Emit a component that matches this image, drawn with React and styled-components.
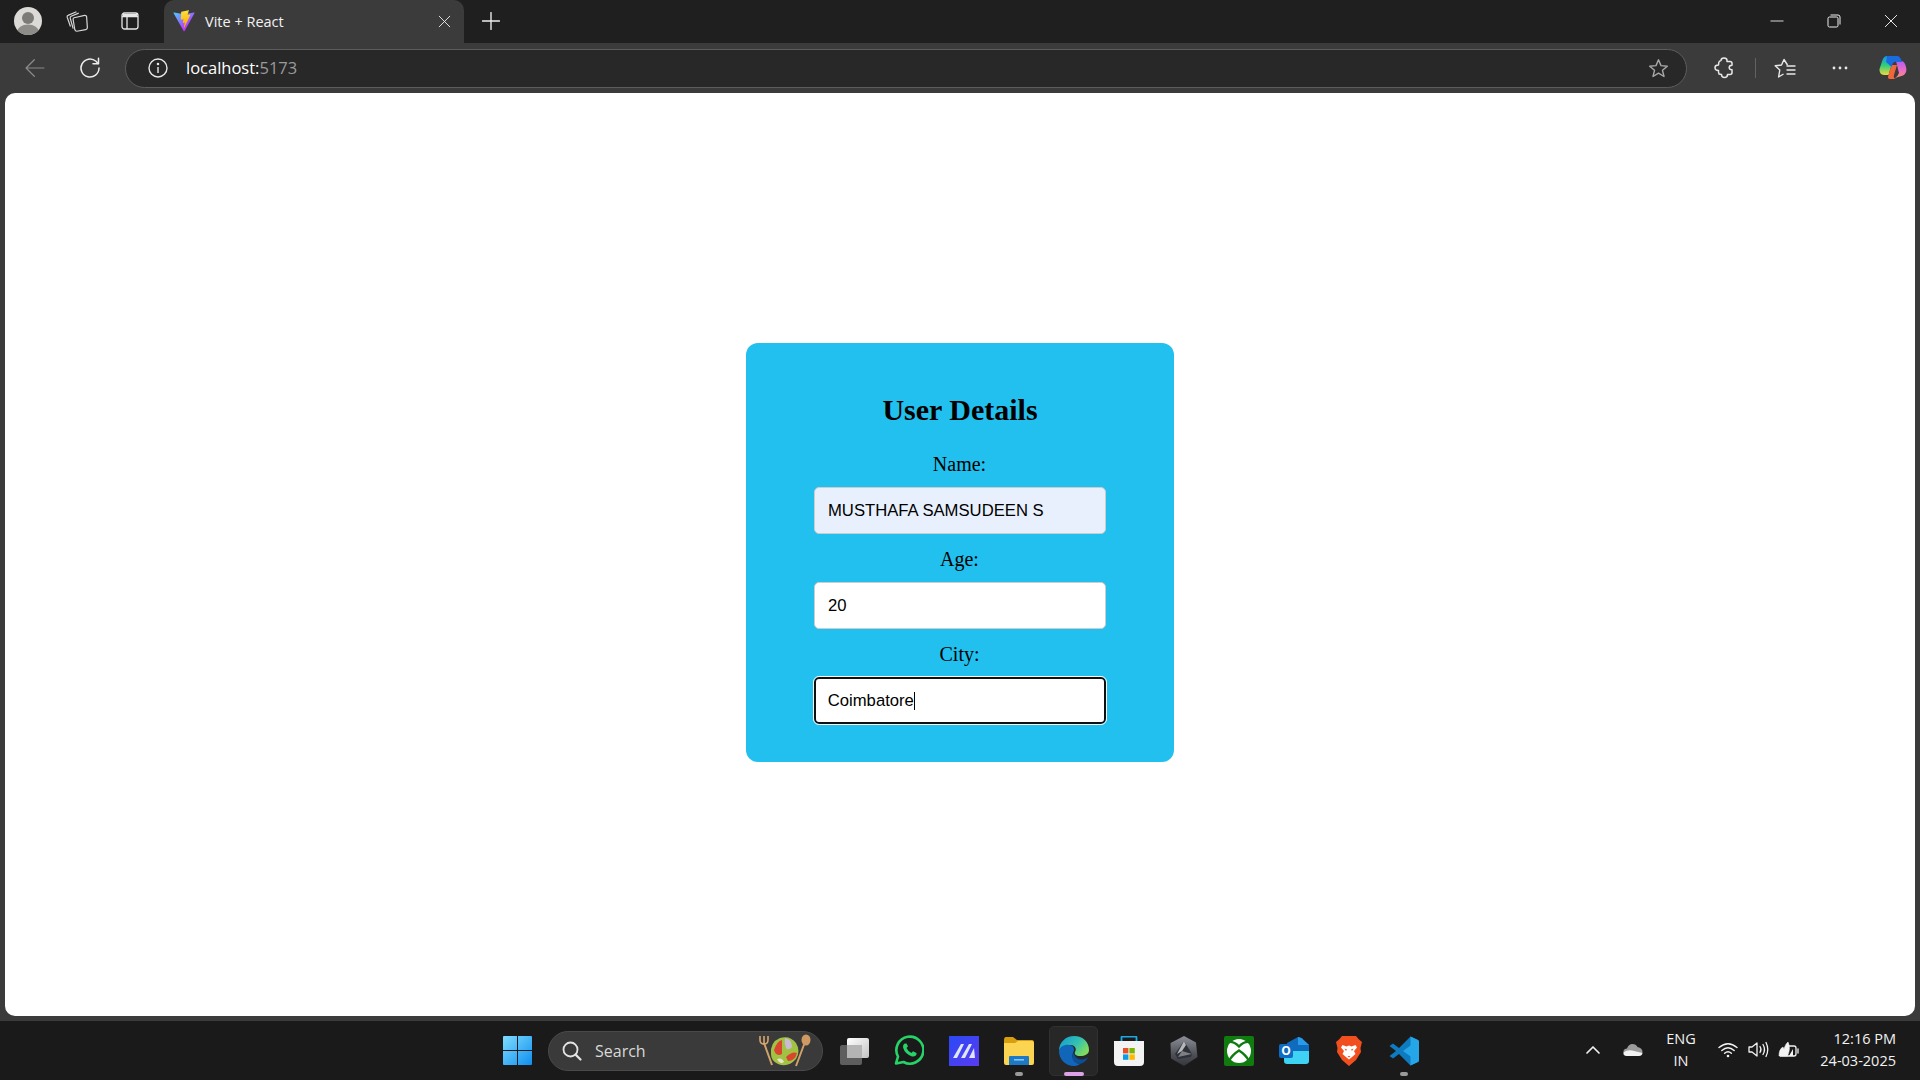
import React from 'react';
import styled, { createGlobalStyle } from 'styled-components';

const GlobalStyle = createGlobalStyle`
  html, body { margin: 0; padding: 0; height: 100%; background: #3b3b3b; overflow: hidden; }
  #root { height: 100%; }
  * { box-sizing: border-box; }
`;

const Screen = styled.div`
  display: flex;
  flex-direction: column;
  height: 1080px;
  width: 1920px;
  font-family: "Open Sans", "Noto Sans", sans-serif;
  color: #fff;
`;

/* browser chrome */
const TabStrip = styled.div`
  display: flex;
  align-items: center;
  height: 43px;
  background: #1f1f1f;
  flex: none;
`;

const StripButton = styled.div`
  display: flex;
  align-items: center;
  justify-content: center;
  flex: none;
  width: ${(p) => p.w || 54}px;
  height: 43px;
  padding-bottom: 1px;
`;

const Tab = styled.div`
  display: flex;
  align-items: center;
  width: 300px;
  height: 43px;
  margin-left: 3px;
  padding: 0 13px 1px 9px;
  background: #3b3b3b;
  border-radius: 10px 10px 0 0;
  font-size: 14.5px;
`;

const TabTitle = styled.span`
  flex: 1;
  margin-left: 10px;
  color: #f2f2f2;
`;

const Spacer = styled.div`
  flex: 1;
`;

const Toolbar = styled.div`
  display: flex;
  align-items: center;
  height: 50px;
  flex: none;
  background: #3b3b3b;
  padding-left: 8px;
`;

const AddressBar = styled.div`
  display: flex;
  align-items: center;
  width: 1562px;
  height: 39px;
  margin: 0 6px 0 8px;
  padding: 0 17px 0 22px;
  background: #282828;
  border: 1.5px solid #5d5d5d;
  border-radius: 20px;
  font-size: 16.5px;
`;

const Host = styled.span`
  margin: 0 0 2px 18px;
  color: #fff;
`;

const Port = styled.span`
  flex: 1;
  margin-bottom: 2px;
  color: #9a9a9a;
`;

const ToolButton = styled.div`
  display: flex;
  align-items: center;
  justify-content: center;
  flex: none;
  width: ${(p) => p.w || 54}px;
  height: 40px;
`;

const ToolDivider = styled.div`
  width: 1px;
  height: 20px;
  flex: none;
  background: #626262;
`;

/* page */
const Page = styled.main`
  flex: 1;
  display: flex;
  justify-content: center;
  align-items: flex-start;
  margin: 0 5px 5px;
  padding-top: 250px;
  background: #fff;
  border-radius: 10px;
`;

const Card = styled.form`
  display: flex;
  flex-direction: column;
  align-items: center;
  width: 428px;
  height: 419px;
  padding-top: 50px;
  background: #22c0ee;
  border-radius: 12px;
  font-family: "Liberation Serif", "Times New Roman", serif;
  color: #000;
`;

const Heading = styled.h2`
  margin: 0 0 26px;
  font-size: 30px;
  line-height: 34px;
  font-weight: 700;
`;

const Label = styled.label`
  display: block;
  margin-right: 1px;
  font-size: 20px;
  line-height: 23px;
`;

const Field = styled.div`
  width: 292px;
  height: 47px;
  margin: 11px 0 ${(p) => (p.last ? 0 : 14)}px;
  display: flex;
  align-items: center;
  padding-left: 13px;
  background: ${(p) => (p.filled ? '#e8f0fe' : '#fff')};
  border: 1.25px solid #cccccc;
  border-radius: 5px;
  font-family: "Liberation Sans", Arial, sans-serif;
  font-size: 16.67px;
  ${(p) =>
    p.focused &&
    `
    border: 2.5px solid #101010;
    padding-left: 11.75px;
    outline: 1.25px solid #fff;
  `}
`;

const Caret = styled.span`
  display: inline-block;
  width: 1px;
  height: 18px;
  background: #000;
`;

/* taskbar */
const Taskbar = styled.footer`
  display: flex;
  align-items: center;
  height: 59px;
  flex: none;
  background: #1a1a1a;
  padding-left: 490px;
`;

const StartButton = styled.div`
  display: flex;
  align-items: center;
  justify-content: center;
  width: 55px;
  height: 50px;
  flex: none;
`;

const SearchPill = styled.div`
  display: flex;
  align-items: center;
  width: 275px;
  height: 40px;
  margin: 0 3px 0 3px;
  padding: 0 10px 0 13px;
  background: #3a3a3a;
  border: 1px solid #4a4a4a;
  border-radius: 20px;
  font-size: 16px;
  color: #d8d8d8;
`;

const SearchText = styled.span`
  flex: 1;
  margin-left: 13px;
`;

const TaskSlot = styled.div`
  position: relative;
  display: flex;
  align-items: center;
  justify-content: center;
  width: 55px;
  height: 50px;
  flex: none;
`;

const TaskIcon = styled.div`
  position: relative;
  display: flex;
`;

const ActiveBox = styled.div`
  position: absolute;
  left: 3px;
  top: 0;
  width: 49px;
  height: 50px;
  background: #272727;
  border: 1px solid #303030;
  border-radius: 5px;
`;

const RunDot = styled.span`
  position: absolute;
  bottom: 0;
  left: 50%;
  transform: translateX(-50%);
  width: ${(p) => (p.active ? 20 : 8)}px;
  height: 4px;
  border-radius: 2px;
  background: ${(p) => (p.active ? '#dba2e6' : '#9a9a9a')};
`;

const Tray = styled.div`
  display: flex;
  align-items: center;
  margin-left: auto;
  padding: 0 24px 2px 0;
  font-size: 14.5px;
  color: #f2f2f2;
`;

const TrayIcon = styled.div`
  display: flex;
  align-items: center;
  justify-content: center;
  width: ${(p) => p.w || 30}px;
  margin-left: ${(p) => p.ml || 0}px;
`;

const Lang = styled.div`
  width: 50px;
  margin: 0 7px 0 8px;
  text-align: center;
  line-height: 22px;
`;

const Clock = styled.div`
  width: 80px;
  margin-left: 13px;
  text-align: right;
  line-height: 22px;
  white-space: nowrap;
`;

/* icons */
const Avatar = () => (
  <svg width="28" height="28" viewBox="0 0 28 28">
    <clipPath id="av"><circle cx="14" cy="14" r="14" /></clipPath>
    <g clipPath="url(#av)">
      <rect width="28" height="28" fill="#dcdad6" />
      <circle cx="14" cy="11" r="6" fill="#7d7b78" />
      <ellipse cx="14" cy="25" rx="11" ry="7.5" fill="#8e8c89" />
    </g>
  </svg>
);

const Collections = () => (
  <svg width="24" height="24" viewBox="0 0 22 22" fill="none" stroke="#d6d6d6" strokeWidth="1.1" strokeLinejoin="round">
    <path d="M5 16 L2 7.5 Q1.6 6.2 2.8 5.8 L10.5 2.5" />
    <path d="M7.5 18 L4.8 8.5 Q4.5 7.2 5.6 6.7 L12.6 3.8" />
    <path d="M8.3 8 L18 5.8 Q19.6 5.7 19.8 7 L20.5 17 Q20.6 18.6 19 18.9 L10.8 20.4 Q9.3 20.4 9 19 L7.4 9.4 Q7.3 8.3 8.3 8 Z" />
  </svg>
);

const VerticalTabs = () => (
  <svg width="18" height="18" viewBox="0 0 18 18" fill="none" stroke="#e6e6e6" strokeWidth="1.3">
    <rect x="1" y="1" width="16" height="16" rx="2.5" />
    <path d="M1 4.5 H17 M6 4.5 V17" />
    <path d="M2 2 H16 V4.5 H2 Z" fill="#e6e6e6" stroke="none" />
  </svg>
);

const ViteLogo = () => (
  <svg width="22" height="22" viewBox="0 0 410 404">
    <defs>
      <linearGradient id="va" x1="6" y1="33" x2="235" y2="344" gradientUnits="userSpaceOnUse">
        <stop stopColor="#41D1FF" />
        <stop offset="1" stopColor="#BD34FE" />
      </linearGradient>
      <linearGradient id="vb" x1="194" y1="8" x2="236" y2="292" gradientUnits="userSpaceOnUse">
        <stop stopColor="#FFEA83" />
        <stop offset="0.08" stopColor="#FFDD35" />
        <stop offset="1" stopColor="#FFA800" />
      </linearGradient>
    </defs>
    <path d="M399.6 59.5 215.9 388.2c-3.8 6.8-13.5 6.8-17.4.1L11.2 59.5c-4.2-7.4 2.1-16.3 10.4-14.8l183.9 32.9c1.2.2 2.4.2 3.5 0l180-32.8c8.3-1.5 14.7 7.3 10.6 14.7Z" fill="url(#va)" />
    <path d="M292.9 1.6 156.9 28.2c-2.2.4-3.8 2.3-4 4.6l-8.4 141.3c-.2 3.3 2.9 5.9 6.1 5.2l37.9-8.7c3.5-.8 6.7 2.3 6 5.9l-11.3 55.2c-.7 3.7 2.7 6.9 6.3 5.8l23.4-7.1c3.6-1.1 7.1 2.1 6.3 5.8l-17.9 86.6c-1.1 5.4 6.1 8.4 9.1 3.7l2-3.1L323.4 88.9c1.9-3.7-1.3-7.9-5.4-7.1l-38.9 7.5c-3.7.7-6.8-2.7-5.8-6.3l25.4-88c1-3.7-2.2-7.1-5.8-6.4Z" fill="url(#vb)" />
  </svg>
);

const Line = ({ size = 16, d, color = '#f0f0f0', sw = 1.3 }) => (
  <svg width={size} height={size} viewBox="0 0 16 16" fill="none" stroke={color} strokeWidth={sw} strokeLinecap="round" strokeLinejoin="round">
    <path d={d} />
  </svg>
);

const BackArrow = () => <Line size={22} color="#8a8a8a" sw={0.9} d="M1.5 8 H14.5 M7.5 2 L1.5 8 L7.5 14" />;

const Reload = () => (
  <svg width="22" height="22" viewBox="0 0 22 22" fill="none" stroke="#ececec" strokeWidth="1.5" strokeLinecap="round" strokeLinejoin="round">
    <path d="M20 11 A9 9 0 1 1 17 4.3 L19 6.5" />
    <path d="M19.5 1.2 V6.8 H14" />
  </svg>
);

const InfoIcon = () => (
  <svg width="20" height="20" viewBox="0 0 20 20" fill="none" stroke="#e8e8e8" strokeWidth="1.4">
    <circle cx="10" cy="10" r="9" />
    <path d="M10 9 V15" />
    <circle cx="10" cy="6" r="0.6" fill="#e8e8e8" />
  </svg>
);

const StarPath = 'M10.5 1.8 13 7.6l6.3.6-4.8 4.1 1.5 6.2-5.5-3.3L5 18.5l1.5-6.2L1.7 8.2 8 7.6Z';

const StarOutline = () => (
  <svg width="21" height="21" viewBox="0 0 21 21" fill="none" stroke="#a8a8a8" strokeWidth="1.4" strokeLinejoin="round">
    <path d={StarPath} />
  </svg>
);

const Puzzle = () => (
  <svg width="20" height="22" viewBox="0 0 20 22" fill="none" stroke="#e8e8e8" strokeWidth="1.5" strokeLinejoin="round">
    <path d="M7 3.5 Q7 1 10 1 Q13 1 13 3.5 L13 4.5 L16 4.5 Q18 4.5 18 6.5 L18 8.2 Q15.2 8.2 15.2 10.5 Q15.2 12.8 18 12.8 L18 15.5 Q18 17.5 16 17.5 L13.5 17.5 Q13.5 20.5 10.5 20.5 Q7.5 20.5 7.5 17.5 L5 17 Q4.2 14.5 4.5 13.5 Q1 13.5 1 10.5 Q1 8 4.5 8 L4.8 5.5 Q5 4 7 3.5 Z" />
  </svg>
);

const Favorites = () => (
  <svg width="22" height="21" viewBox="0 0 22 21" fill="none" stroke="#e8e8e8" strokeWidth="1.4" strokeLinejoin="round">
    <path d="M13.5 7 L10 1.5 L7.5 7 L1.2 7.8 L5.8 12 L4.6 19 L9.5 16" />
    <path d="M13 8 H21 M13 12 H21 M13 16 H21" strokeLinecap="round" />
  </svg>
);

const Dots = () => (
  <svg width="16" height="4" viewBox="0 0 16 4" fill="#e8e8e8">
    <circle cx="2" cy="2" r="1.4" />
    <circle cx="8" cy="2" r="1.4" />
    <circle cx="14" cy="2" r="1.4" />
  </svg>
);

const Copilot = () => (
  <svg width="28" height="28" viewBox="0 0 28 28">
    <defs>
      <linearGradient id="ca" x1="0.3" y1="0" x2="0.3" y2="1">
        <stop offset="0" stopColor="#1a8ff0" />
        <stop offset="0.5" stopColor="#2fd07a" />
        <stop offset="1" stopColor="#f0d83a" />
      </linearGradient>
      <linearGradient id="cb" x1="0.5" y1="0" x2="0.5" y2="1">
        <stop offset="0" stopColor="#b45cf0" />
        <stop offset="0.6" stopColor="#f070c0" />
        <stop offset="1" stopColor="#f59070" />
      </linearGradient>
    </defs>
    <path d="M8 2 H18 Q15 3 14 6 L9.5 21 H5 Q0 20.5 0.5 15 L3.5 6 Q5 2 8 2 Z" fill="url(#ca)" />
    <path d="M17 7 H23 Q26 8 27 13 Q28.5 19 24 21.5 L16 24 Q19 22 20 19 Z" fill="url(#cb)" />
    <path d="M9.5 21 L12.5 11 L15 11 L18 11 L15 21 Q14 25 17.5 25 H11 Q8 25 9.5 21 Z" fill="#f2663a" />
    <path d="M8 2 H18 Q21 2 22.5 6.5 L23 8 H18 Q16 7 14 9 L12.5 13 L7 8 Q8 4 8 2 Z" fill="#1a6ae0" />
  </svg>
);

const MinIcon = () => <Line size={14} sw={1} d="M1 8 H15" />;

const RestoreIcon = () => (
  <svg width="14" height="14" viewBox="0 0 14 14" fill="none" stroke="#f0f0f0" strokeWidth="1">
    <rect x="1" y="3" width="10" height="10" rx="1.5" />
    <path d="M3.5 1 H11 Q13 1 13 3 V10.5" />
  </svg>
);

const CloseIcon = ({ size = 14 }) => <Line size={size} sw={1.1} d="M1.5 1.5 L14.5 14.5 M14.5 1.5 L1.5 14.5" />;

const PlusIcon = () => <Line size={18} sw={1.2} d="M8 0.5 V15.5 M0.5 8 H15.5" />;

const WindowsLogo = () => (
  <svg width="29" height="29" viewBox="0 0 29 29">
    <defs>
      <linearGradient id="wl" x1="0" y1="0" x2="1" y2="1">
        <stop offset="0" stopColor="#7fdcff" />
        <stop offset="1" stopColor="#0f8fef" />
      </linearGradient>
    </defs>
    <path d="M1 0 H14 V14 H0 V1 Q0 0 1 0 Z M15 0 H28 Q29 0 29 1 V14 H15 Z M0 15 H14 V29 H1 Q0 29 0 28 Z M15 15 H29 V28 Q29 29 28 29 H15 Z" fill="url(#wl)" />
  </svg>
);

const SearchIcon = () => (
  <svg width="20" height="20" viewBox="0 0 20 20" fill="none" stroke="#e4e4e4" strokeWidth="1.8" strokeLinecap="round">
    <circle cx="8.5" cy="8.5" r="7" />
    <path d="M13.6 13.6 L18.5 18.5" strokeWidth="2.2" />
  </svg>
);

const Salad = () => (
  <svg width="54" height="34" viewBox="0 0 54 34">
    <path d="M6 9 L14 31" stroke="#d3a26c" strokeWidth="2" />
    <path d="M2 2 V6 Q2 10 6 10 Q10 10 10 6 V2 M6 2 V10" fill="none" stroke="#d7a56e" strokeWidth="1.6" />
    <path d="M47 8 L38 32" stroke="#d3a26c" strokeWidth="2" />
    <ellipse cx="48" cy="6" rx="4.5" ry="5.5" fill="#cf9a62" />
    <path d="M13 20 Q12 8 22 4 Q32 1 38 9 Q43 17 38 25 Q30 34 20 30 Q13 27 13 20 Z" fill="#a2c244" />
    <path d="M16 16 Q19 7 24 6 L24 20 Q18 23 16 16 Z" fill="#d9452e" />
    <path d="M27 4 Q34 5 34 13 Q30 17 28 14 Q26 9 27 4 Z" fill="#cbbad6" />
    <path d="M28 23 Q34 17 39 19 Q37 27 30 27 Z" fill="#d9452e" />
    <path d="M19 25 Q24 23 26 28 Q22 31 19 25 Z" fill="#e9e4cf" />
  </svg>
);

const TaskView = () => (
  <svg width="30" height="28" viewBox="0 0 30 28">
    <defs>
      <linearGradient id="tv" x1="0" y1="0" x2="1" y2="1">
        <stop offset="0" stopColor="#ffffff" />
        <stop offset="1" stopColor="#c4c4c4" />
      </linearGradient>
    </defs>
    <rect x="1" y="8" width="22" height="20" rx="2" fill="#5e5e5e" />
    <rect x="8" y="1" width="22" height="20" rx="2" fill="url(#tv)" />
    <rect x="8" y="8" width="15" height="13" fill="#b4b4b4" />
  </svg>
);

const WhatsApp = () => (
  <svg width="30" height="31" viewBox="0 0 30 31" fill="none">
    <path d="M2 28.5 L4 21.5 A13.5 13.5 0 1 1 9.5 27 Z" stroke="#25d366" strokeWidth="2.6" strokeLinejoin="round" />
    <path d="M10.8 8.5 Q8.5 9.5 9.2 13 Q11 19 18 21.5 Q21.5 22 22.5 19.5 L22.5 18 L19 16.2 L17.5 18 Q14 16.5 12.5 13 L14 11.3 L12.5 8.5 Z" fill="#25d366" />
  </svg>
);

const LinearApp = () => (
  <svg width="30" height="30" viewBox="0 0 30 30">
    <defs>
      <linearGradient id="la" x1="0" y1="0" x2="1" y2="1">
        <stop offset="0" stopColor="#2a49f5" />
        <stop offset="1" stopColor="#5b3bf0" />
      </linearGradient>
    </defs>
    <rect width="30" height="30" fill="url(#la)" />
    <path d="M4 22 L12 8 H15 L8 22 Z M12 22 L20 8 H23 L16 22 Z" fill="#dfe6ff" />
    <path d="M20 22 L25 12 L26 22 Z" fill="#dfe6ff" />
  </svg>
);

const Folder = () => (
  <svg width="30" height="28" viewBox="0 0 30 28">
    <path d="M0 3 Q0 0 2 0 H9 L13 3 H28 Q30 3 30 6 V10 H0 Z" fill="#d99e0e" />
    <path d="M0 6 H11 L14 4 H28 Q30 4 30 6 V26 Q30 28 28 28 H2 Q0 28 0 26 Z" fill="#fbd451" />
    <path d="M5 28 V20 Q5 19 6 19 H24 Q25 19 25 20 V28 Z" fill="#1d78c6" />
    <rect x="10" y="22" width="10" height="1.6" fill="#7fc6f5" />
  </svg>
);

const Edge = () => (
  <svg width="30" height="30" viewBox="0 0 30 30">
    <defs>
      <linearGradient id="ed" x1="0" y1="0" x2="1" y2="0.6">
        <stop offset="0" stopColor="#0f9ad6" />
        <stop offset="0.6" stopColor="#35c1b0" />
        <stop offset="1" stopColor="#7fdc5e" />
      </linearGradient>
    </defs>
    <path d="M15 0 C24 0 30 6 30 14 C30 18 26 20 21 20 C17 20 15 18 16 16 C18 13 16 9 12 9 C6 9 0 13 0 15 C0 6 7 0 15 0 Z" fill="url(#ed)" />
    <path d="M0 15 C1 10 6 8 11 9 C15 10 16 13 14 17 C12 22 15 27 21 28 C18 30 16 30 15 30 C6 30 0 23 0 15 Z" fill="#1166ba" />
    <path d="M14 17 C12 22 15 28 21 28 C25 27 28 24 29 21 C26 24 18 25 15.5 19 Z" fill="#0b4f98" />
  </svg>
);

const Store = () => (
  <svg width="30" height="30" viewBox="0 0 30 30">
    <path d="M7.5 5 V1.5 Q7.5 0.5 8.5 0.5 H21.5 Q22.5 0.5 22.5 1.5 V5" fill="none" stroke="#1ca9e8" strokeWidth="1.8" />
    <path d="M0 5 H30 V26 Q30 30 26 30 H4 Q0 30 0 26 Z" fill="#f3f3f3" />
    <rect x="9" y="12" width="5.4" height="5.4" fill="#e8502a" />
    <rect x="15.4" y="12" width="5.4" height="5.4" fill="#7ab800" />
    <rect x="9" y="18.4" width="5.4" height="5.4" fill="#0a9ce8" />
    <rect x="15.4" y="18.4" width="5.4" height="5.4" fill="#fbb900" />
  </svg>
);

const HexApp = () => (
  <svg width="28" height="30" viewBox="0 0 28 30">
    <defs>
      <linearGradient id="hx" x1="0" y1="0" x2="0" y2="1">
        <stop offset="0" stopColor="#8d9098" />
        <stop offset="0.6" stopColor="#4e5158" />
        <stop offset="1" stopColor="#33353b" />
      </linearGradient>
    </defs>
    <path d="M14 0 L26 6.5 L27.5 21 L14 30 L1 22.5 L0.5 7 Z" fill="url(#hx)" />
    <path d="M14 5 L22 18 L21 21 L8 23 L5 18 Z" fill="#2f3136" />
    <path d="M14 5 L7 18 L12 15 L16 9 Z" fill="#b5b7bc" />
    <path d="M12 15 L22 18 L8 21 Z" fill="#7c7f86" />
  </svg>
);

const Xbox = () => (
  <svg width="30" height="30" viewBox="0 0 30 30">
    <rect width="30" height="30" rx="2" fill="#107c10" />
    <circle cx="15" cy="15" r="12" fill="#fff" />
    <path d="M4 6 Q10 5 15 10.5 Q20 5 26 6" fill="none" stroke="#107c10" strokeWidth="2.4" />
    <path d="M5 25 Q8 19 15 14.5 Q22 19 25 25" fill="none" stroke="#107c10" strokeWidth="2.4" />
  </svg>
);

const Outlook = () => (
  <svg width="30" height="27" viewBox="0 0 30 27">
    <path d="M8 6 L19 0 Q21 0 23 1.5 L30 8 V14 H8 Z" fill="#0f6cbd" />
    <path d="M19 0 Q21 0 23 1.5 L30 8 H19 Z" fill="#2a9be8" />
    <path d="M5 14 H30 V24 Q30 27 27 27 H8 Q5 27 5 24 Z" fill="#3ed2f5" />
    <rect x="0" y="7" width="14" height="14" rx="2" fill="#0f6cc4" />
    <text x="7" y="18" fill="#fff" fontSize="12" fontWeight="700" textAnchor="middle" fontFamily="Open Sans, sans-serif">O</text>
  </svg>
);

const Brave = () => (
  <svg width="26" height="30" viewBox="0 0 26 30">
    <path d="M6 0 H20 L23 3.5 L26 6 L24.5 12 L25 16 L20 24 L13 30 L6 24 L1 16 L1.5 12 L0 6 L3 3.5 Z" fill="#f24f1f" />
    <path d="M6.5 9 L10.5 10.5 L13 9.5 L15.5 10.5 L19.5 9 L21 11.5 L18 15 L19.5 18 L16 21 L13 23.5 L10 21 L6.5 18 L8 15 L5 11.5 Z" fill="#fff" />
    <path d="M8.5 12.5 L11 13.5 L10 15 Z M17.5 12.5 L15 13.5 L16 15 Z M11.5 20 H14.5 L13 21.5 Z" fill="#f24f1f" />
  </svg>
);

const VsCode = () => (
  <svg width="30" height="30" viewBox="0 0 30 30">
    <path d="M21.5 0.5 L29 4 Q30 4.6 30 6 V24 Q30 25.4 29 26 L21.5 29.5 L10 18 L4 22.5 L0.5 20 L7 15 L0.5 10 L4 7.5 L10 12 Z" fill="#0e7ac0" />
    <path d="M21.5 0.5 L29 4 Q30 4.6 30 6 V24 Q30 25.4 29 26 L21.5 29.5 V20.5 L14 15 L21.5 9.5 Z" fill="#25a6e8" />
  </svg>
);

const Chevron = () => <Line size={16} sw={1.7} d="M2 11 L8 5 L14 11" />;

const Cloud = () => (
  <svg width="20" height="13" viewBox="0 0 20 13">
    <path d="M4 12 Q0 11 0.5 8 Q1 5.5 4 5.5 Q5.5 1 9.5 1 Q13 1 14.5 4 Q19.5 5 19.5 9 Q19.5 12 16 12 Z" fill="#9b9b9b" />
    <path d="M3 13 Q0 12.5 0.5 9.5 Q4 6.5 9 7.5 L19.5 10 Q19 13 16 13 Z" fill="#f2f2f2" />
  </svg>
);

const Wifi = () => (
  <svg width="20" height="16" viewBox="0 0 20 16" fill="none" stroke="#f2f2f2" strokeWidth="1.4" strokeLinecap="round">
    <path d="M1 5.5 Q10 -2 19 5.5" />
    <path d="M3.8 8.5 Q10 3 16.2 8.5" />
    <path d="M6.6 11.3 Q10 8.3 13.4 11.3" />
    <circle cx="10" cy="14" r="1.3" fill="#f2f2f2" stroke="none" />
  </svg>
);

const Volume = () => (
  <svg width="21" height="17" viewBox="0 0 21 17" fill="none" stroke="#f2f2f2" strokeWidth="1.3" strokeLinecap="round" strokeLinejoin="round">
    <path d="M1 6 H4 L9 2 V15 L4 11 H1 Z" />
    <path d="M12 5.5 Q14 8.5 12 11.5" />
    <path d="M15 3.5 Q18 8.5 15 13.5" />
    <path d="M18 1.5 Q21.5 8.5 18 15.5" />
  </svg>
);

const Battery = () => (
  <svg width="21" height="18" viewBox="0 0 21 18" fill="none" stroke="#f2f2f2" strokeWidth="1.3">
    <path d="M9 5 H16 Q18 5 18 7 V13 Q18 15 16 15 H2" />
    <path d="M20 8 V12" strokeLinecap="round" />
    <path d="M1 15 Q1 8 5 6 Q7 9 6 15 Z M6 15 Q5 5 10 1 Q13 7 9.5 15 Z" fill="#f2f2f2" strokeWidth="0.6" />
    <path d="M11 15 L15 8 V15 Z" fill="#f2f2f2" stroke="none" />
  </svg>
);

const fields = [
  { label: 'Name:', value: 'MUSTHAFA SAMSUDEEN S', filled: true },
  { label: 'Age:', value: '20' },
  { label: 'City:', value: 'Coimbatore', focused: true, last: true },
];

const taskApps = [
  { icon: <TaskView /> },
  { icon: <WhatsApp /> },
  { icon: <LinearApp /> },
  { icon: <Folder />, running: true },
  { icon: <Edge />, active: true },
  { icon: <Store /> },
  { icon: <HexApp /> },
  { icon: <Xbox /> },
  { icon: <Outlook /> },
  { icon: <Brave /> },
  { icon: <VsCode />, running: true },
];

const App = () => (
  <Screen>
    <GlobalStyle />
    <TabStrip>
      <StripButton w={55}><Avatar /></StripButton>
      <StripButton w={44}><Collections /></StripButton>
      <StripButton w={62}><VerticalTabs /></StripButton>
      <Tab>
        <ViteLogo />
        <TabTitle>Vite + React</TabTitle>
        <CloseIcon size={13} />
      </Tab>
      <StripButton w={54}><PlusIcon /></StripButton>
      <Spacer />
      <StripButton w={57}><MinIcon /></StripButton>
      <StripButton w={57}><RestoreIcon /></StripButton>
      <StripButton w={58}><CloseIcon /></StripButton>
    </TabStrip>
    <Toolbar>
      <ToolButton><BackArrow /></ToolButton>
      <ToolButton w={55}><Reload /></ToolButton>
      <AddressBar>
        <InfoIcon />
        <Host>localhost:</Host>
        <Port>5173</Port>
        <StarOutline />
      </AddressBar>
      <ToolButton w={62}><Puzzle /></ToolButton>
      <ToolDivider />
      <ToolButton w={58}><Favorites /></ToolButton>
      <ToolButton w={52}><Dots /></ToolButton>
      <ToolButton w={54}><Copilot /></ToolButton>
    </Toolbar>
    <Page>
      <Card>
        <Heading>User Details</Heading>
        {fields.map((f) => (
          <React.Fragment key={f.label}>
            <Label>{f.label}</Label>
            <Field filled={f.filled} focused={f.focused} last={f.last}>
              {f.value}
              {f.focused && <Caret />}
            </Field>
          </React.Fragment>
        ))}
      </Card>
    </Page>
    <Taskbar>
      <StartButton><WindowsLogo /></StartButton>
      <SearchPill>
        <SearchIcon />
        <SearchText>Search</SearchText>
        <Salad />
      </SearchPill>
      {taskApps.map((a, i) => (
        <TaskSlot key={i}>
          {a.active && <ActiveBox />}
          <TaskIcon>{a.icon}</TaskIcon>
          {(a.running || a.active) && <RunDot active={a.active} />}
        </TaskSlot>
      ))}
      <Tray>
        <TrayIcon><Chevron /></TrayIcon>
        <TrayIcon ml={10}><Cloud /></TrayIcon>
        <Lang>ENG<br />IN</Lang>
        <TrayIcon><Wifi /></TrayIcon>
        <TrayIcon><Volume /></TrayIcon>
        <TrayIcon><Battery /></TrayIcon>
        <Clock>12:16 PM<br />24-03-2025</Clock>
      </Tray>
    </Taskbar>
  </Screen>
);

export default App;
